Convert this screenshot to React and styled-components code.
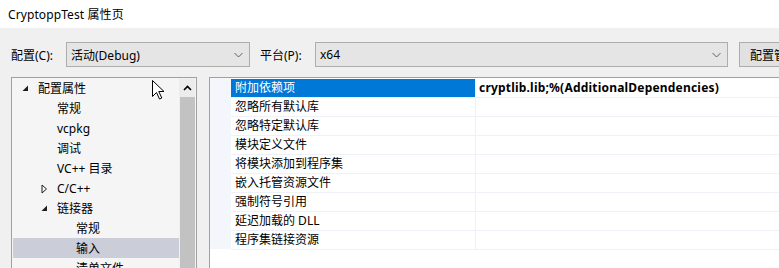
import styled, { createGlobalStyle } from 'styled-components';

const GlobalStyle = createGlobalStyle`
  html, body {
    margin: 0;
    padding: 0;
    background: #f0f0f0;
    overflow: hidden;
  }
  body {
    font-family: 'Noto Sans', 'Noto Sans CJK SC', sans-serif;
    font-size: 12px;
    color: #000;
  }
`;

const treeItems = [
  { label: '配置属性', level: 0, toggle: 'open' },
  { label: '常规', level: 1 },
  { label: 'vcpkg', level: 1 },
  { label: '调试', level: 1 },
  { label: 'VC++ 目录', level: 1 },
  { label: 'C/C++', level: 1, toggle: 'closed' },
  { label: '链接器', level: 1, toggle: 'open' },
  { label: '常规', level: 2 },
  { label: '输入', level: 2, selected: true },
  { label: '清单文件', level: 2 },
];

const props = [
  { name: '附加依赖项', value: 'cryptlib.lib;%(AdditionalDependencies)', selected: true },
  { name: '忽略所有默认库' },
  { name: '忽略特定默认库' },
  { name: '模块定义文件' },
  { name: '将模块添加到程序集' },
  { name: '嵌入托管资源文件' },
  { name: '强制符号引用' },
  { name: '延迟加载的 DLL' },
  { name: '程序集链接资源' },
];

function Chevron() {
  return (
    <svg width="9" height="6" viewBox="0 0 9 6">
      <polyline points="0.5,1 4.5,5 8.5,1" fill="none" stroke="#606060" strokeWidth="1" />
    </svg>
  );
}

function Toggle({ kind }) {
  if (kind === 'open') {
    return (
      <svg width="7" height="7" viewBox="0 0 7 7">
        <polygon points="6,0.5 6,6 0.5,6" fill="#1e1e1e" />
      </svg>
    );
  }
  return (
    <svg width="7" height="10" viewBox="0 0 7 10">
      <polygon points="1,1 5.5,5 1,9" fill="none" stroke="#1e1e1e" strokeWidth="1" />
    </svg>
  );
}

function Cursor() {
  return (
    <svg width="13" height="20" viewBox="0 0 13 20">
      <path
        d="M0.5 0.5 L0.5 16.5 L4.5 12.5 L7.5 19 L9.8 18 L6.8 11.5 L12 11.5 Z"
        fill="#fff"
        stroke="#000"
        strokeWidth="1"
        strokeLinejoin="miter"
      />
    </svg>
  );
}

export default function App() {
  return (
    <>
      <GlobalStyle />
      <Window>
        <TitleBar>CryptoppTest 属性页</TitleBar>
        <Toolbar>
          <Label>配置(C):</Label>
          <Combo $width={184}>
            <span>活动(Debug)</span>
            <Chevron />
          </Combo>
          <Label $gap={10}>平台(P):</Label>
          <Combo $width={413}>
            <span>x64</span>
            <Chevron />
          </Combo>
          <ToolButton>配置管理器(O)...</ToolButton>
        </Toolbar>
        <Main>
          <TreePanel>
            <TreeList>
              {treeItems.map((item, i) => (
                <TreeRow key={i} $level={item.level} $selected={item.selected}>
                  <ToggleSlot>{item.toggle && <Toggle kind={item.toggle} />}</ToggleSlot>
                  {item.label}
                </TreeRow>
              ))}
            </TreeList>
            <ScrollBar>
              <ScrollArrow>
                <svg width="9" height="6" viewBox="0 0 9 6">
                  <polyline points="1,5 4.5,1.5 8,5" fill="none" stroke="#000" strokeWidth="1.6" />
                </svg>
              </ScrollArrow>
              <ScrollThumb />
            </ScrollBar>
            <CursorSpot>
              <Cursor />
            </CursorSpot>
          </TreePanel>
          <GridPanel>
            <Gutter />
            <Grid>
              {props.map((p, i) => (
                <GridRow key={i}>
                  <NameCell $selected={p.selected}>{p.name}</NameCell>
                  <ValueCell>{p.value}</ValueCell>
                </GridRow>
              ))}
            </Grid>
          </GridPanel>
        </Main>
      </Window>
    </>
  );
}

const Window = styled.div`
  width: 779px;
  height: 268px;
  display: flex;
  flex-direction: column;
  overflow: hidden;
`;

const TitleBar = styled.div`
  height: 28px;
  background: #fff;
  padding-left: 8px;
  line-height: 30px;
  letter-spacing: 0.1px;
  flex: none;
`;

const Toolbar = styled.div`
  display: flex;
  align-items: center;
  padding: 14px 0 0 11px;
  height: 25px;
  flex: none;
  white-space: nowrap;
`;

const Label = styled.div`
  width: 55px;
  margin-left: ${(p) => p.$gap || 0}px;
  flex: none;
`;

const Combo = styled.div`
  width: ${(p) => p.$width}px;
  height: 25px;
  box-sizing: border-box;
  border: 1px solid #adadad;
  background: #e5e5e5;
  display: flex;
  align-items: center;
  justify-content: space-between;
  padding: 0 6px 0 4px;
  flex: none;
`;

const ToolButton = styled.div`
  margin-left: 11px;
  height: 25px;
  box-sizing: border-box;
  border: 1px solid #adadad;
  background: #e1e1e1;
  padding: 0 10px;
  display: flex;
  align-items: center;
  flex: none;
`;

const Main = styled.div`
  flex: 1;
  display: flex;
  margin-top: 10px;
  padding-left: 11px;
  gap: 12px;
  min-height: 0;
`;

const TreePanel = styled.div`
  position: relative;
  width: 186px;
  box-sizing: border-box;
  border: 1px solid #a0a0a0;
  border-bottom: none;
  background: #f5f5f5;
  display: flex;
  flex: none;
`;

const TreeList = styled.div`
  flex: 1;
  padding-left: 1px;
`;

const TreeRow = styled.div`
  height: 20px;
  display: flex;
  align-items: center;
  padding-left: ${(p) => 9 + p.$level * 19}px;
  background: ${(p) => (p.$selected ? '#cbcdd9' : 'transparent')};
  white-space: nowrap;
`;

const ToggleSlot = styled.span`
  width: 13px;
  height: 20px;
  display: flex;
  align-items: center;
  margin-right: 3px;
  margin-top: 1px;
`;

const ScrollBar = styled.div`
  width: 16px;
  margin-right: 1px;
  display: flex;
  flex-direction: column;
  background: #f0f0f0;
`;

const ScrollArrow = styled.div`
  height: 18px;
  margin-top: 1px;
  display: flex;
  align-items: center;
  justify-content: center;
  background: #ececec;
`;

const ScrollThumb = styled.div`
  flex: 1;
  background: #c2c2c2;
  margin: 0 0 0 1px;
`;

const CursorSpot = styled.div`
  position: absolute;
  left: 140px;
  top: 2px;
  line-height: 0;
`;

const GridPanel = styled.div`
  flex: 1;
  box-sizing: border-box;
  border-top: 1px solid #a0a0a0;
  border-left: 1px solid #a0a0a0;
  background: #fff;
  display: flex;
  align-items: flex-start;
  padding-top: 1px;
`;

const Gutter = styled.div`
  width: 21px;
  height: 171px;
  margin-top: -1px;
  background: #f3f6fb;
  flex: none;
`;

const Grid = styled.div`
  flex: 1;
  display: flex;
  flex-direction: column;
`;

const GridRow = styled.div`
  display: flex;
  height: 19px;
  box-sizing: border-box;
  border-bottom: 1px solid #eef2f8;
`;

const NameCell = styled.div`
  width: 245px;
  flex: none;
  box-sizing: border-box;
  padding-left: 4px;
  line-height: 18px;
  background: ${(p) => (p.$selected ? '#0078d7' : '#fff')};
  color: ${(p) => (p.$selected ? '#fff' : '#000')};
  border-right: 1px solid #eef2f8;
  white-space: nowrap;
`;

const ValueCell = styled.div`
  flex: 1;
  padding-left: 3px;
  line-height: 18px;
  font-weight: bold;
  letter-spacing: 0.2px;
  white-space: nowrap;
`;
